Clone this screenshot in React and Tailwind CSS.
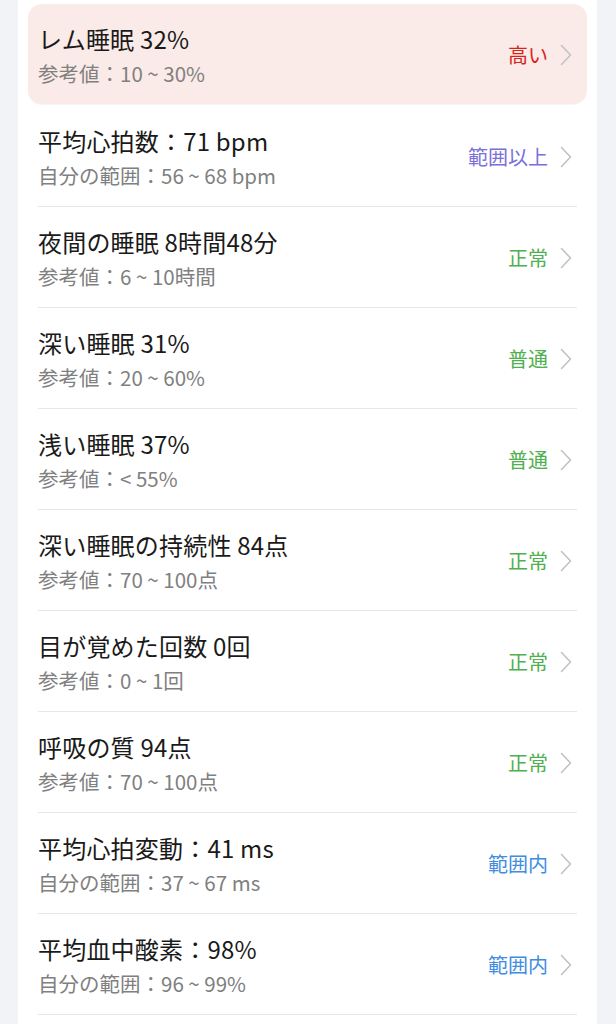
const rows = [
  { title: 'レム睡眠 32%', sub: '参考値：10 ~ 30%', status: '高い', color: 'text-[#d8231b]', alert: true },
  { title: '平均心拍数：71 bpm', sub: '自分の範囲：56 ~ 68 bpm', status: '範囲以上', color: 'text-[#7b70d8]' },
  { title: '夜間の睡眠 8時間48分', sub: '参考値：6 ~ 10時間', status: '正常', color: 'text-[#4fb04f]' },
  { title: '深い睡眠 31%', sub: '参考値：20 ~ 60%', status: '普通', color: 'text-[#4fb04f]' },
  { title: '浅い睡眠 37%', sub: '参考値：< 55%', status: '普通', color: 'text-[#4fb04f]' },
  { title: '深い睡眠の持続性 84点', sub: '参考値：70 ~ 100点', status: '正常', color: 'text-[#4fb04f]' },
  { title: '目が覚めた回数 0回', sub: '参考値：0 ~ 1回', status: '正常', color: 'text-[#4fb04f]' },
  { title: '呼吸の質 94点', sub: '参考値：70 ~ 100点', status: '正常', color: 'text-[#4fb04f]' },
  { title: '平均心拍変動：41 ms', sub: '自分の範囲：37 ~ 67 ms', status: '範囲内', color: 'text-[#3f8de0]' },
  { title: '平均血中酸素：98%', sub: '自分の範囲：96 ~ 99%', status: '範囲内', color: 'text-[#3f8de0]' },
];

function Chevron() {
  return (
    <svg width="12" height="22" viewBox="0 0 12 22" fill="none" className="shrink-0">
      <path d="M1.5 1.5 L10.5 11 L1.5 20.5" stroke="#c2c2c2" strokeWidth="1.6" strokeLinecap="round" strokeLinejoin="round" />
    </svg>
  );
}

function Row({ row }) {
  return (
    <div className="flex items-center justify-between h-full pt-[1px]">
      <div className="flex flex-col gap-[6px]">
        <span className="text-[24px] leading-[30px] text-[#1a1a1a] tracking-[0.2px]">{row.title}</span>
        <span className="text-[20.5px] leading-[26px] text-[#808080]">{row.sub}</span>
      </div>
      <div className="flex items-center gap-[12px]">
        <span className={`text-[20px] leading-[26px] ${row.color}`}>{row.status}</span>
        <Chevron />
      </div>
    </div>
  );
}

export default function App() {
  return (
    <div
      className="min-h-screen bg-[#f2f3f6] flex"
      style={{ fontFamily: '"Noto Sans CJK JP", "Noto Sans", sans-serif' }}
    >
      <div className="ml-[18px] w-[579px] bg-white pt-[4px] h-[1024px] overflow-hidden">
        {rows.map((row, i) =>
          row.alert ? (
            <div key={i} className="mx-[10px] mb-[2px] h-[100px] rounded-[14px] bg-[#fbebe8] pl-[10px] pr-[15px] shadow-[0_1px_1px_rgba(0,0,0,0.04)]">
              <Row row={row} />
            </div>
          ) : (
            <div key={i} className="mx-5 h-[101px] border-b border-[#e6e6e6] pr-[5px]">
              <Row row={row} />
            </div>
          )
        )}
      </div>
    </div>
  );
}
